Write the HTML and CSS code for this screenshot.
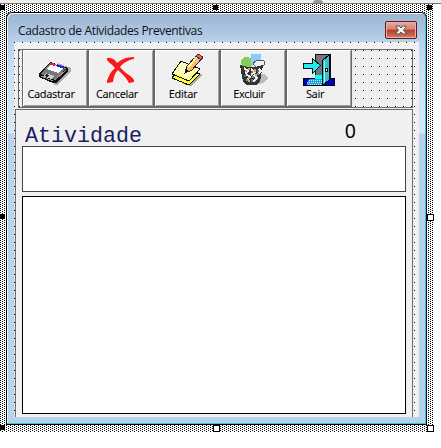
FILE: index.html
```
<!DOCTYPE html>
<html lang="pt-BR">
<head>
<meta charset="utf-8">
<title>Cadastro de Atividades Preventivas</title>
<link rel="stylesheet" href="styles.css">
</head>
<body>
<div class="ruler"><i></i></div>
<main class="selection">
  <section class="window">
    <header class="titlebar">
      <h1>Cadastro de Atividades Preventivas</h1>
      <button class="close" aria-label="Fechar"><svg width="12" height="10" viewBox="0 0 12 10"><path d="M1 1h3l2 2 2-2h3v1L8.500 5 11 8v1H8L6 7 4 9H1V8l2.500-3L1 2z" fill="#f5f5f0" stroke="#4d545c"/></svg></button>
    </header>
    <div class="client">
      <nav class="toolbar">
        <button class="tool"><svg width="34" height="34" viewBox="0 0 34 34" shape-rendering="crispEdges"><path d="M20 10l13 5v3L20 32h-4z" fill="#aaa"/><path d="M12 9l18 6v3L19 30h-4L1 24v-3z" fill="#111"/><path d="M12 10l16 5-11 12-14-6z" fill="#777"/><path d="M14 10l12 4-6 6-11-4z" fill="#fff"/><path d="M13 10l5 1-1 2-5-1z" fill="#e22"/><path d="M19 11l8 3-1 2-8-3z" fill="#22d"/><path d="M8 20l8 3-3 3-8-3z" fill="#ccc"/><path d="M8 21l3 1-2 2-3-1z" fill="#222"/><path d="M17 27l11-10M3 23l12 5" stroke="#999"/></svg><span>Cadastrar</span></button>
        <button class="tool"><svg width="34" height="34" viewBox="0 0 34 34"><path d="M3 5c4 0 7 0 10 5 4-3 8-6 17-6v2c-6 1-11 4-14 8 4 6 11 8 14 13v2l-5 1c-3-6-7-9-11-13-3 3-4 6-5 12l-6 1v-2c2-6 4-10 8-13C8 11 5 10 3 7z" fill="#fb1919"/></svg><span>Cancelar</span></button>
        <button class="tool"><svg width="34" height="34" viewBox="0 0 34 34" shape-rendering="crispEdges"><path d="M14 14l19 8-12 11-8-2z" fill="#aaa"/><path d="M10 13l20 8-11 11-17-7z" fill="#ff3" stroke="#111"/><path d="M11 8l19 8-11 12-17-7z" fill="#ff9" stroke="#111"/><path d="M12 10l13 6-7 8-12-6z" fill="#ffc"/><path d="M15 20l2-7L28 1l5 3-11 13z" fill="#fb6" stroke="#222"/><path d="M18 14L28 3" stroke="#ff9" stroke-width="2"/><path d="M26 3l2-2 5 3-2 3z" fill="#e66" stroke="#522"/><path d="M24 5l5 3" stroke="#ccc" stroke-width="2"/><path d="M15 20l1-4 3 2z" fill="#111"/></svg><span>Editar</span></button>
        <button class="tool"><svg width="34" height="34" viewBox="0 0 34 34" shape-rendering="crispEdges"><path d="M22 21h7l3 4-3 4-9 3z" fill="#bbb"/><path d="M5 7l4-3 7 1v9H6z" fill="#8c5"/><path d="M15 1h10v11H15z" fill="#8cf"/><path d="M17 10l5-3 6 1v4l-8 3z" fill="#eee" stroke="#555"/><path d="M4 12q11 4 23 0l-3 17-4 3H10l-3-3z" fill="#333"/><path d="M8 15l4 3-3 3m6-5l4 3-4 3m8-6l2 2-3 3M10 21l4 3-3 3m7-5l3 3-4 4" fill="none" stroke="#eee" stroke-width="2"/><path d="M13 15v2m0 7v2m6-10v3m-7 9h2m5-6h2m-12-4h2" stroke="#e95" stroke-width="2"/><path d="M9 22v2m7 2v3m6-12v2m-6-1v2" stroke="#37b" stroke-width="2"/><path d="M17 23v2m-7 2h2m9-6h2" stroke="#5a5" stroke-width="2"/></svg><span>Excluir</span></button>
        <button class="tool"><svg width="34" height="34" viewBox="0 0 34 34" shape-rendering="crispEdges"><path d="M1.500 25.500h31v7h-31z" fill="#00c" stroke="#001"/><path d="M13 1h15v24H13z" fill="#777" stroke="#111"/><path d="M13 22h7v4h-7z" fill="#0ff"/><path d="M7 26h13v6H5z" fill="#39d"/><path d="M7 27h13M5 29h15M6 31h14" stroke="#8ff" stroke-dasharray="1 1"/><path d="M20.500 7.500l7-6v25l-7 6z" fill="#3bc3c3" stroke="#001"/><path d="M22 8v22" stroke="#8ff"/><path d="M23 15h2v3h-2z" fill="#fff" stroke="#111"/><path d="M1.500 10.500h9v-5l8 7-8 8v-5h-9z" fill="#2ee" stroke="#012"/></svg><span>Sair</span></button>
      </nav>
      <section class="panel">
        <div class="heading"><label for="atividade">Atividade</label><output>0</output></div>
        <input id="atividade" class="field">
        <div class="list"></div>
      </section>
    </div>
  </section>
  <i class="handle solid top left"></i><i class="handle solid top center"></i><i class="handle solid top right"></i>
  <i class="handle solid middle left"></i><i class="handle middle right"></i>
  <i class="handle solid bottom left"></i><i class="handle bottom center"></i><i class="handle bottom right"></i>
</main>
</body>
</html>
```
FILE: styles.css
```
* { box-sizing: border-box; }
body { margin: 0; background: #fff; height: 448px; overflow: hidden; font-family: "Noto Sans", sans-serif; }
button { font: inherit; padding: 0; }
.ruler { height: 4px; background: #eee; border-bottom: 1px solid #777; }
.ruler i { display: block; width: 10px; height: 3px; margin-left: 313px; background: #999; border-radius: 3px 3px 0 0; }
.selection {
  position: relative; width: 434px; height: 428px; padding: 8px 8px 8px 6px;
  background:
    conic-gradient(from 270deg at 1px 1px, #000 90deg, transparent 0) 0 0 / 4px 2px,
    conic-gradient(from 270deg at 1px 1px, #000 90deg, transparent 0) 2px 1px / 4px 2px, #fff;
}
.window {
  width: 421px; height: 413px; padding: 0 6px 6px 7px;
  border: 1px solid #000; border-right-color: #111; border-radius: 6px 6px 0 0;
  background: linear-gradient(#9ab4d2, #b9d1ea 29px, #c9dff3 55px, #dbe8f5 120px, #b9d1ea 121px);
  box-shadow: inset -1px -1px #34c5dc, inset 1px 1px #f3f8fc;
}
.titlebar { height: 29px; display: flex; justify-content: space-between; align-items: flex-start; }
h1 { margin: 9px 0 0 4px; font: 12px/18px "Open Sans", sans-serif; letter-spacing: -.35px; color: #111; white-space: nowrap; }
.close {
  width: 32px; height: 18px; margin: 8px 3px 0 0; border: 1px solid #571b25; border-radius: 2px;
  background: linear-gradient(#e9a99d, #d98175 45%, #b93c22 50%, #d77b66);
  box-shadow: inset 0 0 0 1px #e9b4a9; display: grid; place-items: center;
}
.client {
  height: 375px; width: 405px; padding: 7px 6px 0 1px;
  background: conic-gradient(from 270deg at 1px 1px, #000 90deg, #f0f0f0 0) 0 0 / 8px 8px;
}
.toolbar {
  height: 59px; margin-left: 3px; padding-left: 3px; display: flex;
  border: 1px solid #696969;
  background: conic-gradient(from 270deg at 1px 1px, #000 90deg, #f0f0f0 0) 0 0 / 8px 8px;
}
.tool {
  width: 66px; height: 57px; display: flex; flex-direction: column; align-items: center;
  background: #f0f0f0; border: solid #696969; border-width: 0 1px 1px 1px;
  box-shadow: inset 1px 1px #fff, inset -1px -1px #a0a0a0;
  font-size: 11px; line-height: 14px; letter-spacing: -.35px;
}
.tool svg { margin-top: 3px; flex: none; }
.tool span { padding-right: 8px; }
.panel {
  height: 308px; margin-top: 1px; padding: 0 5px 0 6px; border: solid #696969; border-width: 1px 1px 0 1px;
  background: conic-gradient(from 270deg at 1px 1px, #fff 90deg, #f0f0f0 0) 0 0 / 8px 8px;
}
.heading { height: 36px; display: flex; justify-content: space-between; }
label { margin: 15px 0 0 3px; font: 21.700px/24px "Liberation Mono", monospace; color: #1c1c64; height: 20px; background: #f0f0f0; }
output { margin: 8px 51px 0 0; font: 19.500px/25px "Noto Sans", sans-serif; color: #000; }
.field { display: block; width: 384px; height: 46px; border: 1px solid #444; background: #fff; outline: 0; border-radius: 0; }
.list { width: 384px; height: 218px; margin-top: 4px; border: 1px solid #000; background: #fff; }
.handle { position: absolute; width: 7px; height: 7px; border: 1px solid #000; background: #fff; }
.solid { width: 5px; height: 5px; background: #000; }
.top { top: 1px; } .middle { top: 210px; } .bottom { top: 421px; }
.left { left: 0; } .center { left: 213px; } .right { left: 427px; }
```
